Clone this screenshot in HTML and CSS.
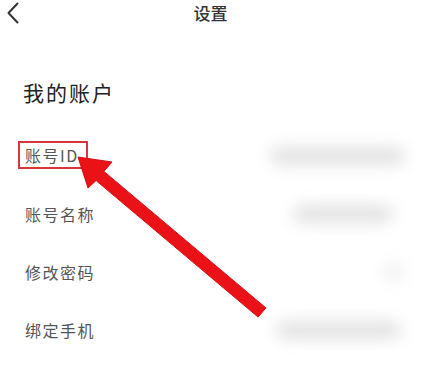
FILE: index.html
```html
<!DOCTYPE html>
<html lang="zh">
<head>
<meta charset="utf-8">
<link rel="stylesheet" href="styles.css">
</head>
<body>
<div class="page">
  <header class="topbar">
    <svg class="back" width="16" height="24" viewBox="0 0 16 24"><path d="M12.5 2.5 L3.5 12 L12.5 21.5" fill="none" stroke="#333" stroke-width="2" stroke-linecap="round" stroke-linejoin="round"/></svg>
    <div class="title">设置</div>
  </header>
  <h2 class="section">我的账户</h2>
  <ul class="list">
    <li class="row"><span class="label mark">账号ID</span><span class="value v1"></span></li>
    <li class="row"><span class="label">账号名称</span><span class="value v2"></span></li>
    <li class="row"><span class="label">修改密码</span><span class="value v3"></span></li>
    <li class="row"><span class="label">绑定手机</span><span class="value v4"></span></li>
  </ul>
  <svg class="arrow" width="421" height="367" viewBox="0 0 421 367">
    <polygon points="78,157 112,162 103.9,171.4 265.9,307.9 258.1,317.1 96.1,180.6 88,188" fill="#ea1117" stroke="#d40f16" stroke-width="1" stroke-linejoin="round"/>
  </svg>
</div>
</body>
</html>
```
FILE: styles.css
```css
* { box-sizing: border-box; }
html, body { margin: 0; padding: 0; background: #fff; }
body { font-family: "Noto Sans CJK SC", "Noto Sans", sans-serif; color: #333; }
.page { position: relative; width: 421px; height: 367px; overflow: hidden; }
.topbar { position: relative; height: 28px; display: flex; align-items: center; justify-content: center; }
.back { position: absolute; left: 5px; top: 1px; }
.title { font-size: 17px; line-height: 24px; color: #333; margin-top: -3px; font-weight: 500; }
.section { margin: 52px 0 0 23px; font-size: 21px; line-height: 24px; font-weight: 400; letter-spacing: 2px; color: #222; }
.list { list-style: none; margin: 23px 0 0 0; padding: 0; }
.row { height: 58px; display: flex; align-items: center; padding-left: 25px; }
.label { font-size: 16px; line-height: 20px; letter-spacing: 1.5px; color: #555; }
.mark { border: 2px solid #d9363b; padding: 2px 7px 2px 5px; margin-left: -7px; margin-top: -2px; }
.value { margin-left: auto; height: 18px; background: #e2e2e2; border-radius: 9px; filter: blur(8px); }
.v1 { width: 135px; margin-right: 16px; }
.v2 { width: 100px; margin-right: 28px; }
.v3 { width: 22px; margin-right: 16px; opacity: 0.5; }
.v4 { width: 125px; margin-right: 20px; }
.arrow { position: absolute; left: 0; top: 0; }
```
